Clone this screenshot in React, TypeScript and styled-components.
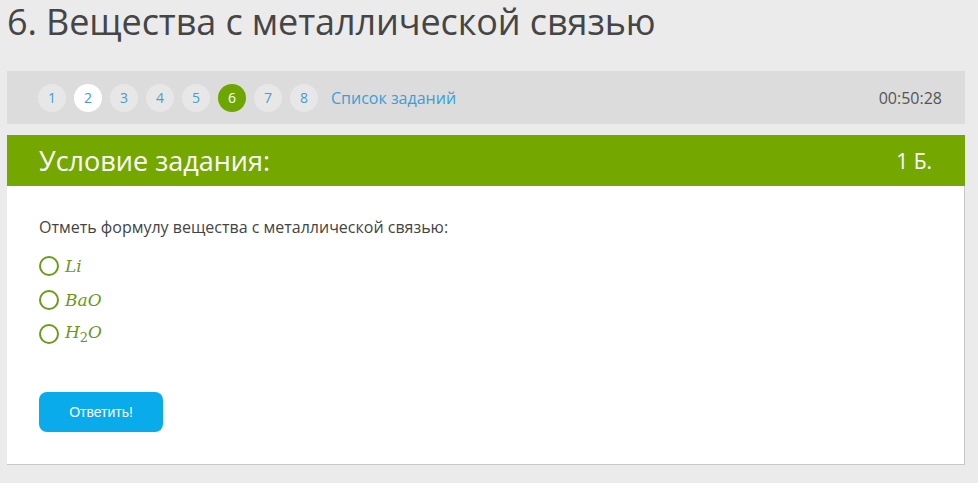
import React from 'react';
import styled, { createGlobalStyle } from 'styled-components';

const GlobalStyle = createGlobalStyle`
  html, body {
    margin: 0;
    padding: 0;
    background: #ebebeb;
    font-family: 'Open Sans', 'Noto Sans', sans-serif;
  }
`;

const PageStyles = styled.div`
  width: 958px;
  padding: 0 0 18px 7px;
`;

const Title = styled.h1`
  margin: 0;
  height: 71px;
  font-size: 36px;
  font-weight: 400;
  line-height: 44px;
  color: #454545;
  letter-spacing: -0.1px;
`;

const NavBar = styled.div`
  height: 53px;
  background: #dcdcdc;
  display: flex;
  align-items: center;
  padding: 0 23px 0 31px;
  box-sizing: border-box;
  margin-bottom: 11px;
`;

const Steps = styled.div`
  display: flex;
  align-items: center;
  gap: 8px;
  flex: 1;
`;

const Step = styled.span<{ state?: 'done' | 'current' }>`
  width: 28px;
  height: 28px;
  border-radius: 50%;
  display: flex;
  align-items: center;
  justify-content: center;
  font-size: 14px;
  background: ${p => (p.state === 'current' ? '#6ea600' : p.state === 'done' ? '#ffffff' : '#e7e7e7')};
  color: ${p => (p.state === 'current' ? '#ffffff' : '#3d9fd3')};
`;

const TaskListLink = styled.a`
  margin-left: 5px;
  font-size: 16px;
  color: #3a9fd5;
  text-decoration: none;
`;

const Timer = styled.span`
  font-size: 16px;
  color: #555;
`;

const HeaderBar = styled.div`
  height: 51px;
  background: #74a800;
  display: flex;
  align-items: center;
  justify-content: space-between;
  padding: 0 33px 0 32px;
  color: #fff;
  font-size: 27px;
`;

const Points = styled.span`
  font-size: 21px;
`;

const Card = styled.div`
  background: #fff;
  border-right: 1px solid #c8c8c8;
  border-bottom: 1px solid #c8c8c8;
  padding: 30px 32px 32px 32px;
  height: 279px;
  box-sizing: border-box;
`;

const Question = styled.p`
  margin: 0 0 16px;
  font-size: 16px;
  color: #444;
`;

const Options = styled.div`
  display: flex;
  flex-direction: column;
  gap: 11px;
  margin-bottom: 47px;
`;

const Option = styled.label`
  display: flex;
  align-items: center;
  gap: 6px;
  height: 23px;
`;

const Radio = styled.span`
  width: 16px;
  height: 16px;
  border: 2px solid #6c9a1a;
  border-radius: 50%;
`;

const Formula = styled.span`
  font-family: 'DejaVu Serif', 'Liberation Serif', serif;
  font-style: italic;
  font-size: 17px;
  color: #6a981c;

  sub {
    font-style: normal;
    font-size: 13px;
    vertical-align: -4px;
  }
`;

const SubmitButton = styled.button`
  width: 124px;
  height: 40px;
  border: none;
  border-radius: 8px;
  background: #0aabeb;
  color: #fff;
  font-family: 'Liberation Sans', Arial, sans-serif;
  font-size: 14px;
`;

const steps = [1, 2, 3, 4, 5, 6, 7, 8];

export default function App(): JSX.Element {
  return (
    <PageStyles>
      <GlobalStyle />
      <Title>6. Вещества с металлической связью</Title>
      <NavBar>
        <Steps>
          {steps.map(n => (
            <Step key={n} state={n === 6 ? 'current' : n === 2 ? 'done' : undefined}>
              {n}
            </Step>
          ))}
          <TaskListLink href="#">Список заданий</TaskListLink>
        </Steps>
        <Timer>00:50:28</Timer>
      </NavBar>
      <HeaderBar>
        <span>Условие задания:</span>
        <Points>1 Б.</Points>
      </HeaderBar>
      <Card>
        <Question>Отметь формулу вещества с металлической связью:</Question>
        <Options>
          <Option>
            <Radio />
            <Formula>Li</Formula>
          </Option>
          <Option>
            <Radio />
            <Formula>BaO</Formula>
          </Option>
          <Option>
            <Radio />
            <Formula>
              H<sub>2</sub>O
            </Formula>
          </Option>
        </Options>
        <SubmitButton>Ответить!</SubmitButton>
      </Card>
    </PageStyles>
  );
}
